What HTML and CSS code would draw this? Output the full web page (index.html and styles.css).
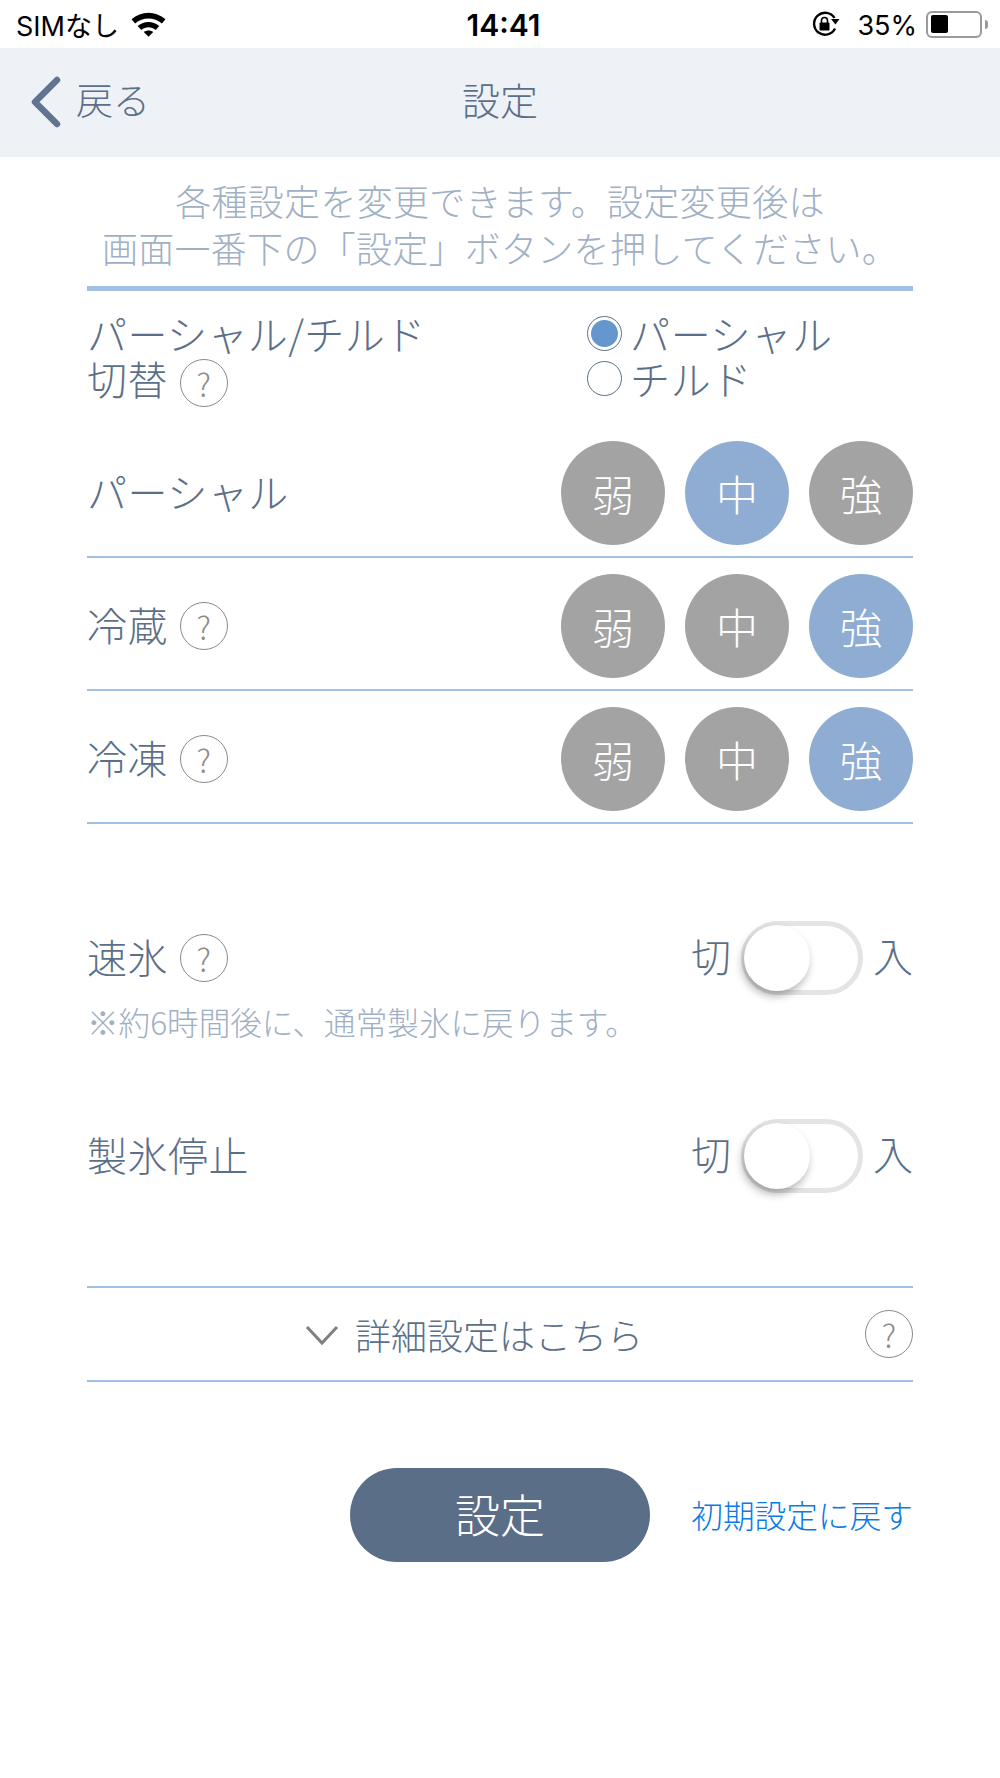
FILE: index.html
```html
<!DOCTYPE html>
<html lang="ja">
<head>
    <meta charset="UTF-8">
    <meta name="viewport" content="width=device-width, initial-scale=1.0">
    <title>設定</title>
    <link rel="stylesheet" href="styles.css">
</head>
<body>
    <!-- ステータスバー -->
    <div class="statusbar">
        <div class="status-left">
            <span class="carrier">SIMなし</span>
            <svg class="wifi" width="35" height="26" viewBox="0 0 34 25">
                <path d="M0.5 8 C10 -0.5 24 -0.5 33.5 8 L30 12 C22.5 5.6 11.5 5.6 4 12 Z" fill="#000"/>
                <path d="M6.5 14.5 C13 9.2 21 9.2 27.5 14.5 L24 18.3 C19.8 14.8 14.2 14.8 10 18.3 Z" fill="#000"/>
                <path d="M12.4 20.2 C15.2 18.2 18.8 18.2 21.6 20.2 L17 25 Z" fill="#000"/>
            </svg>
        </div>
        <span class="clock">14:41</span>
        <div class="status-right">
            <svg class="rotlock" width="28" height="26" viewBox="0 0 28 26">
                <path d="M23 17.5 A11 11 0 1 1 22.5 7" fill="none" stroke="#000" stroke-width="2.4"/>
                <path d="M19 8 L27.5 8 L23.5 13.5 Z" fill="#000"/>
                <rect x="7.5" y="11.5" width="10" height="8" rx="1" fill="#000"/>
                <path d="M9.5 12 V9.5 a3 3 0 0 1 6 0 V12" fill="none" stroke="#000" stroke-width="1.6"/>
            </svg>
            <span class="battery-text">35%</span>
            <div class="battery"><div class="battery-level"></div></div>
            <div class="battery-nub"></div>
        </div>
    </div>

    <!-- ナビゲーション -->
    <div class="navbar">
        <div class="back">
            <svg width="32" height="52" viewBox="0 0 32 52">
                <path d="M27 4 L5 26 L27 48" fill="none" stroke="#60748f" stroke-width="6.5" stroke-linecap="round" stroke-linejoin="round"/>
            </svg>
            <span>戻る</span>
        </div>
        <div class="nav-title">設定</div>
    </div>

    <div class="content">
        <p class="intro">各種設定を変更できます。設定変更後は<br>画面一番下の「設定」ボタンを押してください。</p>

        <div class="mode-row">
            <div class="mode-label">パーシャル/チルド<br>切替<span class="help">?</span></div>
            <div class="radios">
                <div class="radio-item"><span class="radio checked"></span>パーシャル</div>
                <div class="radio-item"><span class="radio"></span>チルド</div>
            </div>
        </div>

        <div class="level-row">
            <div class="label">パーシャル</div>
            <div class="levels">
                <span class="level">弱</span>
                <span class="level on">中</span>
                <span class="level">強</span>
            </div>
        </div>
        <div class="level-row">
            <div class="label">冷蔵<span class="help">?</span></div>
            <div class="levels">
                <span class="level">弱</span>
                <span class="level">中</span>
                <span class="level on">強</span>
            </div>
        </div>
        <div class="level-row">
            <div class="label">冷凍<span class="help">?</span></div>
            <div class="levels">
                <span class="level">弱</span>
                <span class="level">中</span>
                <span class="level on">強</span>
            </div>
        </div>

        <div class="toggle-row first">
            <div class="label">速氷<span class="help">?</span></div>
            <div class="toggle-wrap">
                <span>切</span>
                <div class="toggle"><div class="knob"></div></div>
                <span>入</span>
            </div>
        </div>
        <p class="note">※約6時間後に、通常製氷に戻ります。</p>

        <div class="toggle-row second">
            <div class="label">製氷停止</div>
            <div class="toggle-wrap">
                <span>切</span>
                <div class="toggle"><div class="knob"></div></div>
                <span>入</span>
            </div>
        </div>

        <div class="detail-row">
            <svg class="chevron" width="34" height="22" viewBox="0 0 34 22">
                <path d="M2 3 L17 19 L32 3" fill="none" stroke="#808080" stroke-width="3"/>
            </svg>
            <span class="detail-text">詳細設定はこちら</span>
            <span class="help detail-help">?</span>
        </div>

        <div class="actions">
            <button class="submit">設定</button>
            <a class="reset">初期設定に戻す</a>
        </div>
    </div>
</body>
</html>
```

FILE: styles.css
```css
* {
    margin: 0;
    padding: 0;
    box-sizing: border-box;
}

body {
    width: 1000px;
    height: 1778px;
    background: #fff;
    color: #5c6f88;
    font-family: "Noto Sans CJK JP", "Noto Sans", sans-serif;
    font-weight: 300;
    overflow: hidden;
}

/* ステータスバー */
.statusbar {
    height: 48px;
    display: grid;
    grid-template-columns: 1fr auto 1fr;
    align-items: center;
    padding: 0 12px 0 16px;
    color: #000;
}

.status-left, .status-right {
    display: flex;
    align-items: center;
}

.status-right {
    justify-content: flex-end;
}

.carrier {
    font-size: 27px;
    font-family: "Inter", "Noto Sans CJK JP", sans-serif;
    font-weight: 400;
}

.wifi {
    margin-left: 12px;
}

.clock {
    font-family: "Inter", sans-serif;
    font-size: 30px;
    font-weight: 600;
    padding: 2px 0 0 3px;
}

.rotlock {
    margin-right: 17px;
}

.battery-text {
    font-family: "Inter", sans-serif;
    font-size: 27px;
    font-weight: 400;
    margin-right: 9px;
    padding-top: 2px;
}

.battery {
    width: 56px;
    height: 27px;
    border: 2.5px solid #9a9a9a;
    border-radius: 6px;
    padding: 2.5px;
}

.battery-level {
    width: 17px;
    height: 100%;
    background: #000;
    border-radius: 2px;
}

.battery-nub {
    width: 3px;
    height: 9px;
    margin-left: 3px;
    background: #9a9a9a;
    border-radius: 0 3px 3px 0;
}

/* ナビゲーション */
.navbar {
    height: 109px;
    background: #eef1f6;
    position: relative;
    display: flex;
    align-items: center;
    justify-content: center;
}

.back {
    position: absolute;
    left: 30px;
    top: 24px;
    display: flex;
    align-items: center;
    gap: 14px;
    font-size: 37px;
}

.back span {
    padding-bottom: 6px;
}

.nav-title {
    font-size: 38px;
    margin-bottom: 8px;
}

.content {
    padding: 0 87px;
}

.intro {
    height: 134px;
    padding-top: 20px;
    border-bottom: 5px solid #a0c1e3;
    text-align: center;
    color: #9fb0c4;
    font-size: 36px;
    letter-spacing: 0.28px;
    line-height: 47px;
    white-space: nowrap;
}

/* パーシャル/チルド切替 */
.mode-row {
    height: 134px;
    padding-top: 20px;
    display: flex;
    justify-content: space-between;
}

.mode-label {
    font-size: 40px;
    letter-spacing: 0.4px;
    line-height: 45px;
    white-space: nowrap;
}

.mode-label .help {
    margin-top: -4px;
    margin-bottom: -2px;
}

.radios {
    width: 326px;
    font-size: 40px;
    letter-spacing: 0.7px;
    line-height: 45px;
}

.radio-item {
    display: flex;
    align-items: center;
    gap: 8px;
}

.radio {
    width: 35px;
    height: 35px;
    border: 1.5px solid #5c6f88;
    border-radius: 50%;
    background: #fff;
}

.radio.checked {
    padding: 3px;
    background: #6596cd content-box;
}

.label {
    font-size: 40px;
    letter-spacing: 0.5px;
    margin-bottom: 4px;
    display: flex;
    align-items: center;
    white-space: nowrap;
}

.label .help {
    margin-top: 4px;
}

.help {
    display: inline-flex;
    align-items: center;
    justify-content: center;
    width: 48px;
    height: 48px;
    margin-left: 12px;
    border: 1px solid #8a8a8a;
    border-radius: 50%;
    color: #8a8a8a;
    font-size: 32px;
    line-height: 1;
    vertical-align: middle;
}

/* 弱中強 */
.level-row {
    height: 133px;
    padding-top: 4px;
    border-bottom: 2px solid #a0c1e3;
    display: flex;
    align-items: center;
    justify-content: space-between;
}

.levels {
    display: flex;
    gap: 20px;
}

.level {
    width: 104px;
    height: 104px;
    border-radius: 50%;
    background: #a3a3a3;
    color: #fff;
    font-size: 42px;
    display: flex;
    align-items: center;
    justify-content: center;
}

.level.on {
    background: #8fadd2;
}

/* 速氷・製氷停止 */
.toggle-row {
    display: flex;
    align-items: center;
    justify-content: space-between;
    height: 74px;
}

.toggle-row.first {
    margin-top: 97px;
}

.toggle-row.second {
    margin-top: 76px;
}

.toggle-wrap {
    display: flex;
    align-items: center;
    gap: 10px;
    font-size: 40px;
}

.toggle-wrap span {
    padding-bottom: 6px;
}

.toggle {
    width: 122px;
    height: 74px;
    border: 5px solid #e4e4e4;
    border-radius: 37px;
    position: relative;
}

.knob {
    position: absolute;
    left: -2px;
    top: -1px;
    width: 66px;
    height: 66px;
    border-radius: 50%;
    background: #fff;
    box-shadow: -2px 5px 9px rgba(0, 0, 0, 0.3);
}

.note {
    margin-top: 4px;
    color: #9fb0c4;
    font-size: 31.6px;
    line-height: 44px;
    white-space: nowrap;
}

/* 詳細設定 */
.detail-row {
    margin-top: 93px;
    height: 96px;
    padding-right: 52px;
    border-top: 2px solid #a0c1e3;
    border-bottom: 2px solid #a0c1e3;
    position: relative;
    display: flex;
    align-items: center;
    justify-content: center;
}

.chevron {
    margin-right: 16px;
    margin-top: 2px;
}

.detail-text {
    font-size: 36px;
}

.detail-help {
    position: absolute;
    right: 0;
    top: 22px;
}

/* ボタン */
.actions {
    margin-top: 86px;
    position: relative;
    display: flex;
    justify-content: center;
}

.submit {
    width: 300px;
    height: 94px;
    padding-bottom: 4px;
    border: none;
    border-radius: 47px;
    background: #5b6e87;
    color: #fff;
    font-family: inherit;
    font-weight: 300;
    font-size: 45px;
}

.reset {
    position: absolute;
    right: 0;
    top: 23px;
    color: #0a7ae6;
    font-size: 31.7px;
    white-space: nowrap;
}
```
